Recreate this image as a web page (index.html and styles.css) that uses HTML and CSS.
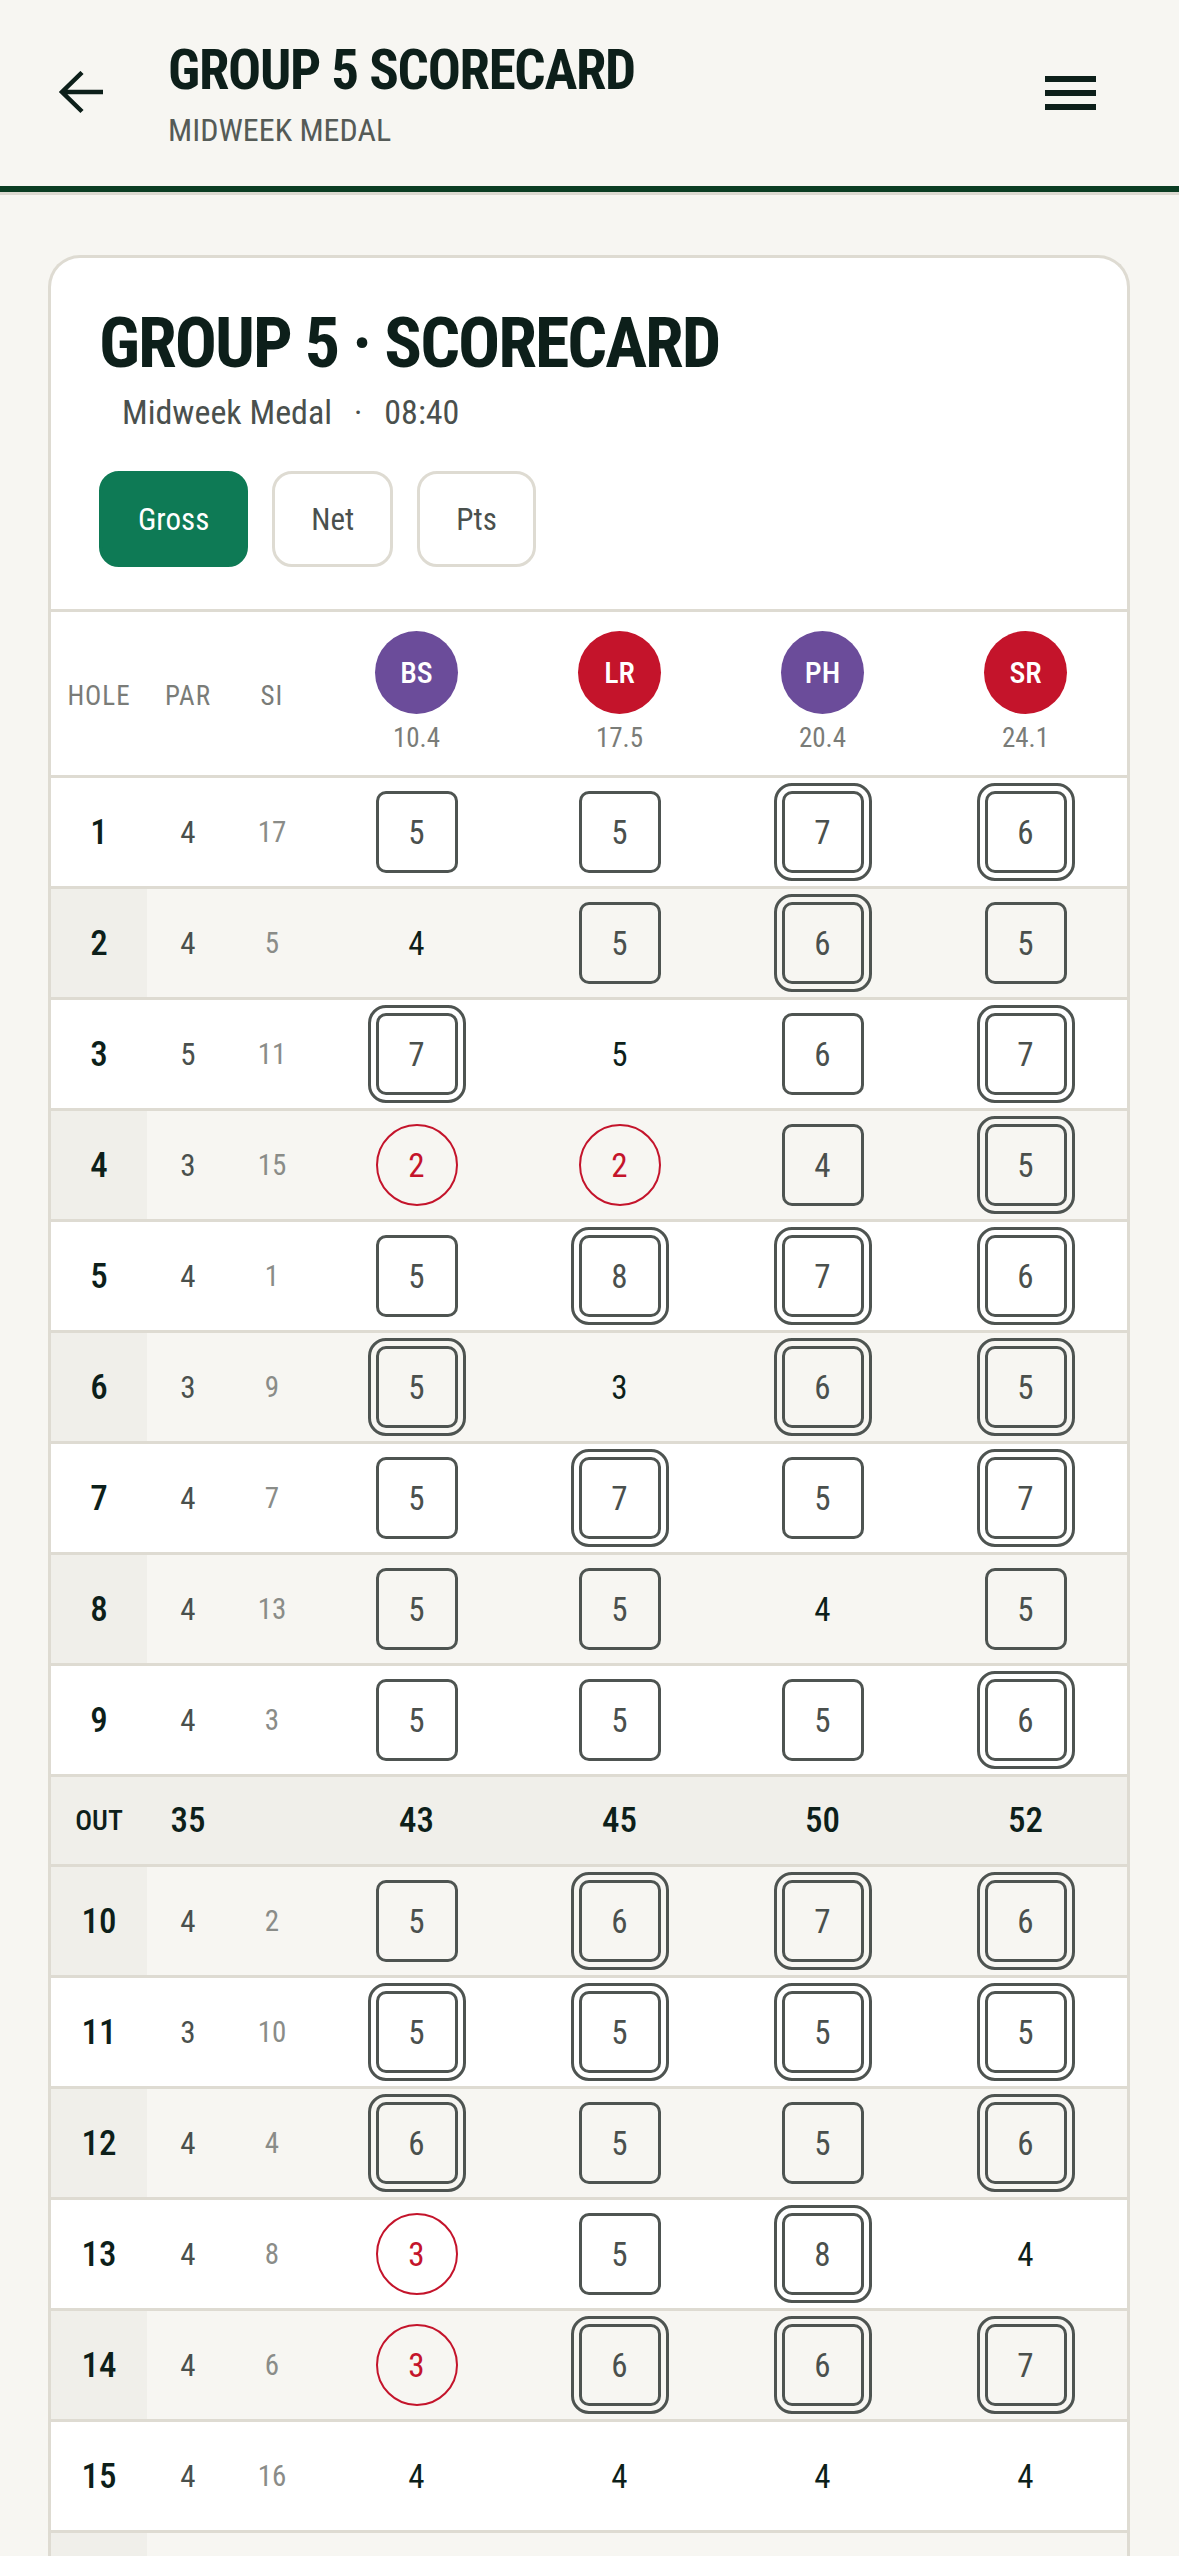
FILE: index.html
```html
<!DOCTYPE html>
<html lang="en">
<head>
<meta charset="utf-8">
<title>Group 5 Scorecard</title>
<link rel="stylesheet" href="styles.css">
</head>
<body>
<header class="topbar">
  <button class="icon-btn back" aria-label="Back">
    <svg width="46" height="44" viewBox="0 0 46 44"><path d="M45 21H5 M24 1.5 L4 21 L24 40.5" fill="none" stroke="#0d1f1a" stroke-width="4.5"/></svg>
  </button>
  <div class="titles">
    <h1 class="top-title">GROUP 5 SCORECARD</h1>
    <div class="top-sub">MIDWEEK MEDAL</div>
  </div>
  <button class="icon-btn menu" aria-label="Menu"><span></span><span></span><span></span></button>
</header>
<main class="page">
  <section class="card">
    <div class="card-head">
      <h2 class="card-title">GROUP 5 · SCORECARD</h2>
      <div class="meta"><span>Midweek Medal</span><span class="dot">·</span><span>08:40</span></div>
      <div class="toggle">
        <button class="seg active">Gross</button>
        <button class="seg">Net</button>
        <button class="seg">Pts</button>
      </div>
    </div>
    <div class="table">
      <div class="row head">
        <div class="cell h-label">HOLE</div>
        <div class="cell h-label">PAR</div>
        <div class="cell h-label">SI</div>
        <div class="cell player"><div class="av purple">BS</div><div class="hcp">10.4</div></div>
        <div class="cell player"><div class="av red">LR</div><div class="hcp">17.5</div></div>
        <div class="cell player"><div class="av purple">PH</div><div class="hcp">20.4</div></div>
        <div class="cell player"><div class="av red">SR</div><div class="hcp">24.1</div></div>
      </div>

      <div class="row">
        <div class="cell c-hole">1</div><div class="cell c-par">4</div><div class="cell c-si">17</div>
        <div class="cell"><span class="sc bogey">5</span></div>
        <div class="cell"><span class="sc bogey">5</span></div>
        <div class="cell"><span class="sc dbl">7</span></div>
        <div class="cell"><span class="sc dbl">6</span></div>
      </div>
      <div class="row even">
        <div class="cell c-hole">2</div><div class="cell c-par">4</div><div class="cell c-si">5</div>
        <div class="cell"><span class="sc">4</span></div>
        <div class="cell"><span class="sc bogey">5</span></div>
        <div class="cell"><span class="sc dbl">6</span></div>
        <div class="cell"><span class="sc bogey">5</span></div>
      </div>
      <div class="row">
        <div class="cell c-hole">3</div><div class="cell c-par">5</div><div class="cell c-si">11</div>
        <div class="cell"><span class="sc dbl">7</span></div>
        <div class="cell"><span class="sc">5</span></div>
        <div class="cell"><span class="sc bogey">6</span></div>
        <div class="cell"><span class="sc dbl">7</span></div>
      </div>
      <div class="row even">
        <div class="cell c-hole">4</div><div class="cell c-par">3</div><div class="cell c-si">15</div>
        <div class="cell"><span class="sc birdie">2</span></div>
        <div class="cell"><span class="sc birdie">2</span></div>
        <div class="cell"><span class="sc bogey">4</span></div>
        <div class="cell"><span class="sc dbl">5</span></div>
      </div>
      <div class="row">
        <div class="cell c-hole">5</div><div class="cell c-par">4</div><div class="cell c-si">1</div>
        <div class="cell"><span class="sc bogey">5</span></div>
        <div class="cell"><span class="sc dbl">8</span></div>
        <div class="cell"><span class="sc dbl">7</span></div>
        <div class="cell"><span class="sc dbl">6</span></div>
      </div>
      <div class="row even">
        <div class="cell c-hole">6</div><div class="cell c-par">3</div><div class="cell c-si">9</div>
        <div class="cell"><span class="sc dbl">5</span></div>
        <div class="cell"><span class="sc">3</span></div>
        <div class="cell"><span class="sc dbl">6</span></div>
        <div class="cell"><span class="sc dbl">5</span></div>
      </div>
      <div class="row">
        <div class="cell c-hole">7</div><div class="cell c-par">4</div><div class="cell c-si">7</div>
        <div class="cell"><span class="sc bogey">5</span></div>
        <div class="cell"><span class="sc dbl">7</span></div>
        <div class="cell"><span class="sc bogey">5</span></div>
        <div class="cell"><span class="sc dbl">7</span></div>
      </div>
      <div class="row even">
        <div class="cell c-hole">8</div><div class="cell c-par">4</div><div class="cell c-si">13</div>
        <div class="cell"><span class="sc bogey">5</span></div>
        <div class="cell"><span class="sc bogey">5</span></div>
        <div class="cell"><span class="sc">4</span></div>
        <div class="cell"><span class="sc bogey">5</span></div>
      </div>
      <div class="row">
        <div class="cell c-hole">9</div><div class="cell c-par">4</div><div class="cell c-si">3</div>
        <div class="cell"><span class="sc bogey">5</span></div>
        <div class="cell"><span class="sc bogey">5</span></div>
        <div class="cell"><span class="sc bogey">5</span></div>
        <div class="cell"><span class="sc dbl">6</span></div>
      </div>

      <div class="row out">
        <div class="cell out-label">OUT</div><div class="cell out-num">35</div><div class="cell"></div>
        <div class="cell out-num">43</div>
        <div class="cell out-num">45</div>
        <div class="cell out-num">50</div>
        <div class="cell out-num">52</div>
      </div>

      <div class="row even">
        <div class="cell c-hole">10</div><div class="cell c-par">4</div><div class="cell c-si">2</div>
        <div class="cell"><span class="sc bogey">5</span></div>
        <div class="cell"><span class="sc dbl">6</span></div>
        <div class="cell"><span class="sc dbl">7</span></div>
        <div class="cell"><span class="sc dbl">6</span></div>
      </div>
      <div class="row">
        <div class="cell c-hole">11</div><div class="cell c-par">3</div><div class="cell c-si">10</div>
        <div class="cell"><span class="sc dbl">5</span></div>
        <div class="cell"><span class="sc dbl">5</span></div>
        <div class="cell"><span class="sc dbl">5</span></div>
        <div class="cell"><span class="sc dbl">5</span></div>
      </div>
      <div class="row even">
        <div class="cell c-hole">12</div><div class="cell c-par">4</div><div class="cell c-si">4</div>
        <div class="cell"><span class="sc dbl">6</span></div>
        <div class="cell"><span class="sc bogey">5</span></div>
        <div class="cell"><span class="sc bogey">5</span></div>
        <div class="cell"><span class="sc dbl">6</span></div>
      </div>
      <div class="row">
        <div class="cell c-hole">13</div><div class="cell c-par">4</div><div class="cell c-si">8</div>
        <div class="cell"><span class="sc birdie">3</span></div>
        <div class="cell"><span class="sc bogey">5</span></div>
        <div class="cell"><span class="sc dbl">8</span></div>
        <div class="cell"><span class="sc">4</span></div>
      </div>
      <div class="row even">
        <div class="cell c-hole">14</div><div class="cell c-par">4</div><div class="cell c-si">6</div>
        <div class="cell"><span class="sc birdie">3</span></div>
        <div class="cell"><span class="sc dbl">6</span></div>
        <div class="cell"><span class="sc dbl">6</span></div>
        <div class="cell"><span class="sc dbl">7</span></div>
      </div>
      <div class="row">
        <div class="cell c-hole">15</div><div class="cell c-par">4</div><div class="cell c-si">16</div>
        <div class="cell"><span class="sc">4</span></div>
        <div class="cell"><span class="sc">4</span></div>
        <div class="cell"><span class="sc">4</span></div>
        <div class="cell"><span class="sc">4</span></div>
      </div>
      <div class="row even">
        <div class="cell c-hole"></div><div class="cell c-par"></div><div class="cell c-si"></div>
        <div class="cell"></div><div class="cell"></div><div class="cell"></div><div class="cell"></div>
      </div>
    </div>
  </section>
</main>
</body>
</html>
```
FILE: styles.css
```css
* { box-sizing: border-box; }
html, body { margin: 0; padding: 0; }
body {
  background: #f7f6f2;
  font-family: "Roboto Condensed", "Liberation Sans Narrow", "DejaVu Sans Condensed", "DejaVu Sans", sans-serif;
  font-stretch: condensed;
  color: #0d1f1a;
}
button { font-family: inherit; font-stretch: inherit; }

/* top bar */
.topbar {
  height: 192px;
  display: flex;
  align-items: center;
  padding: 0 83px 0 58px;
  border-bottom: 6px solid #0b3d23;
  box-shadow: 0 3px 0 #dcd9d1;
  background: #f7f6f2;
}
.icon-btn { background: none; border: 0; padding: 0; margin: 0; }
.back { width: 46px; height: 44px; display: flex; }
.titles { margin-left: 64px; flex: 1; padding-top: 2px; }
.top-title {
  margin: 0;
  font-size: 55px;
  line-height: 60px;
  font-weight: 700;
  letter-spacing: -1.3px;
  color: #0d1f1a;
}
.top-sub {
  margin-top: 11px;
  font-size: 32px;
  line-height: 38px;
  color: #555b57;
  letter-spacing: 0;
}
.menu { width: 51px; display: flex; flex-direction: column; gap: 8px; }
.menu span { display: block; height: 6px; background: #0d1f1a; }

/* page + card */
.page { padding: 63px 49px 0 48px; }
.card {
  background: #fff;
  border: 3px solid #dedbd2;
  border-bottom: 0;
  border-radius: 32px 32px 0 0;
  overflow: hidden;
}
.card-head {
  padding: 46px 48px 42px 48px;
  border-bottom: 3px solid #dedbd2;
}
.card-title {
  margin: 0;
  font-size: 70px;
  line-height: 78px;
  font-weight: 700;
  letter-spacing: -2px;
  color: #0d1f1a;
}
.meta {
  display: flex;
  gap: 22px;
  padding-left: 23px;
  margin-top: 10px;
  font-size: 34px;
  line-height: 40px;
  color: #4a504d;
}
.toggle { display: flex; gap: 24px; margin-top: 39px; }
.seg {
  height: 96px;
  padding: 0 36px;
  border-radius: 20px;
  border: 3px solid #dedbd2;
  background: #fff;
  font-size: 31px;
  color: #4a504d;
}
.seg.active { background: #0e7a55; border-color: #0e7a55; color: #fff; }

/* table */
.row {
  display: grid;
  grid-template-columns: 96px 82px 86px repeat(4, 1fr);
  height: 111px;
  border-bottom: 3px solid #dedbd2;
}
.row.even { background: #f7f6f2; }
.row.even .c-hole { background: #f0efea; }
.row.head { height: 166px; }
.row.out { height: 90px; background: #f0efea; }

.cell { display: flex; align-items: center; justify-content: center; }
.h-label { font-size: 27px; color: #7a7c78; letter-spacing: 1px; padding-top: 5px; }
.player { flex-direction: column; justify-content: flex-start; padding-top: 19px; }
.av {
  width: 83px; height: 83px; border-radius: 50%;
  display: flex; align-items: center; justify-content: center;
  color: #fff; font-size: 30px; font-weight: 500;
}
.av.purple { background: #6b4c9a; }
.av.red { background: #c4142b; }
.hcp { margin-top: 9px; font-size: 27px; line-height: 30px; color: #7a7c78; }

.c-hole { font-size: 35px; font-weight: 500; color: #0d1f1a; }
.c-par { font-size: 31px; color: #4a504d; }
.c-si { font-size: 29px; color: #8a8c88; }

.out-label { font-size: 28px; color: #0d1f1a; font-weight: 500; }
.out-num { font-size: 35px; color: #0d1f1a; font-weight: 500; }

.sc {
  width: 82px; height: 82px;
  display: flex; align-items: center; justify-content: center;
  font-size: 33px; color: #0d1f1a;
}
.sc.bogey {
  border: 3px solid #4e5451;
  border-radius: 10px;
  color: #4a504d;
}
.sc.dbl {
  border: 3px solid #4e5451;
  border-radius: 10px;
  outline: 3px solid #4e5451;
  outline-offset: 5px;
  color: #4a504d;
}
.sc.birdie {
  border: 2.5px solid #c4142b;
  border-radius: 50%;
  color: #c4142b;
}
```
